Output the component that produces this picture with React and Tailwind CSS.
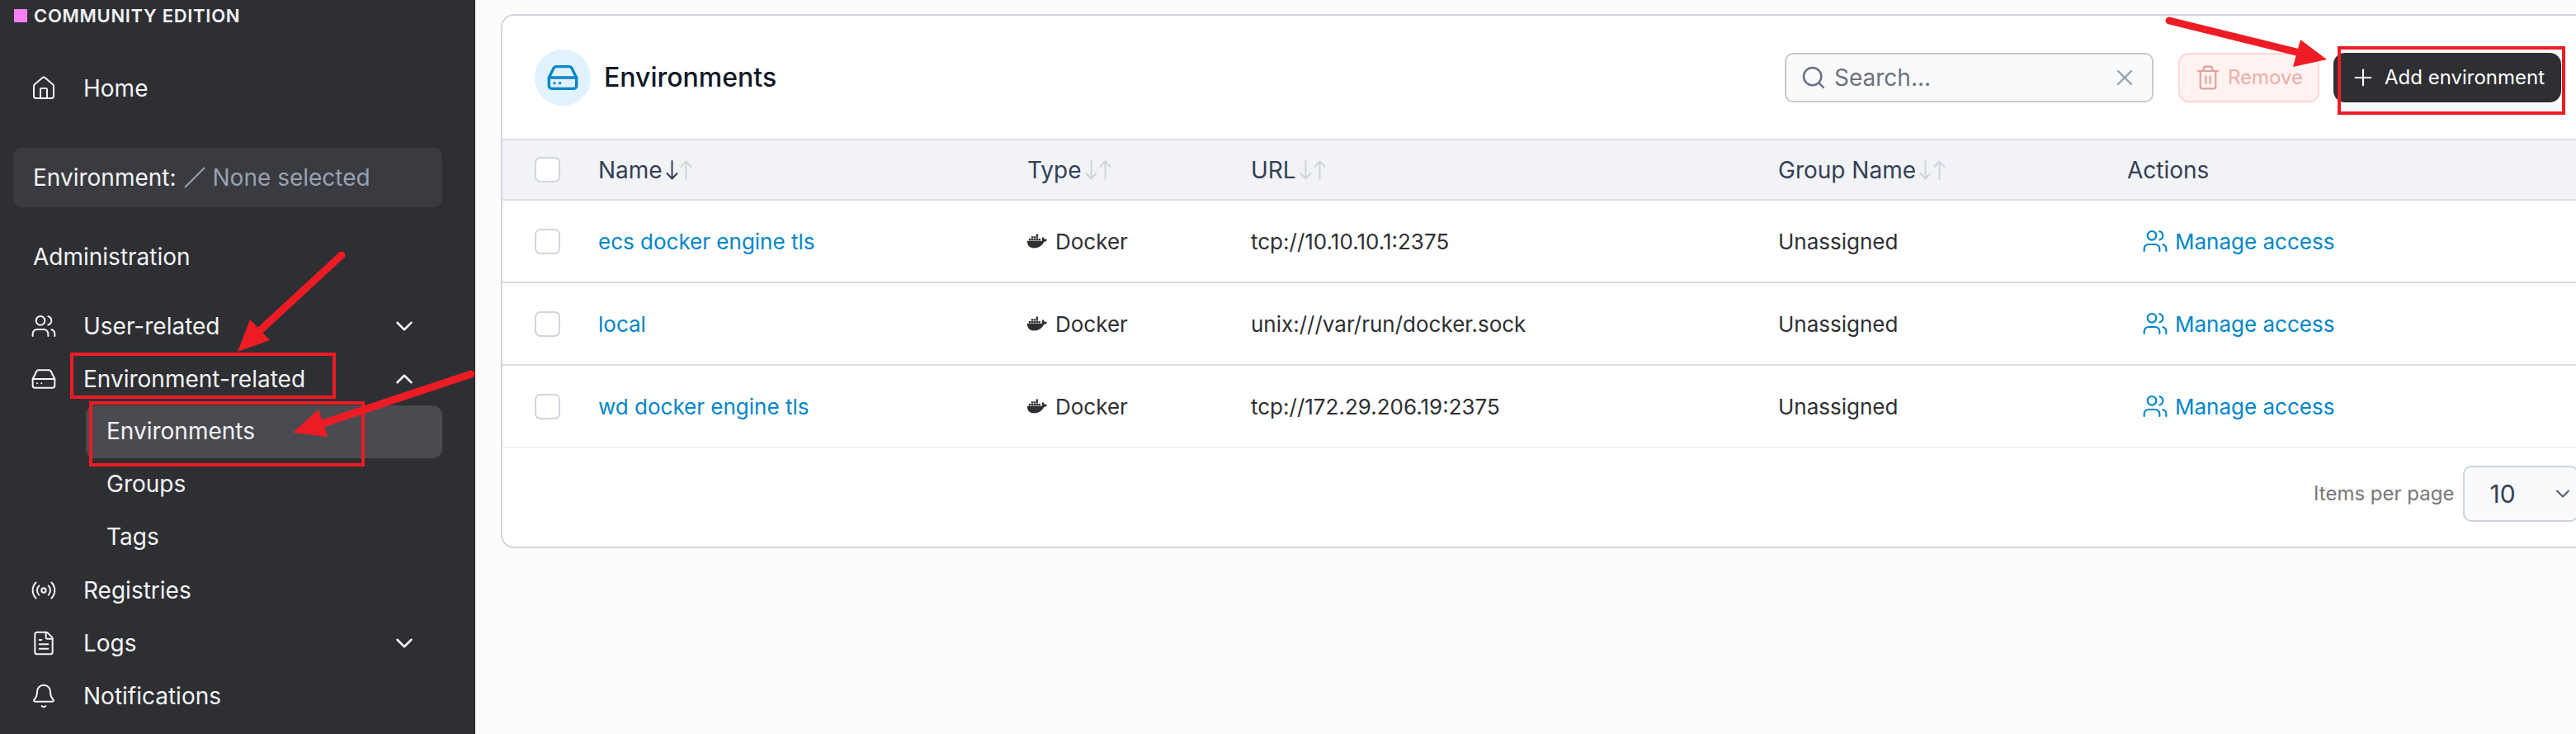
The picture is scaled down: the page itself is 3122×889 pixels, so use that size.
import React from "react";
import {
  Bell,
  ChevronDown,
  ChevronUp,
  FileText,
  HardDrive,
  Home,
  Plus,
  Radio,
  Search,
  Trash2,
  Users,
  X,
} from "lucide-react";
import { FaDocker } from "react-icons/fa";

const rows = [
  { name: "ecs docker engine tls", url: "tcp://10.10.10.1:2375" },
  { name: "local", url: "unix:///var/run/docker.sock" },
  { name: "wd docker engine tls", url: "tcp://172.29.206.19:2375" },
];

const gridCols = "grid grid-cols-[116px_520px_271px_639px_423px_1fr] items-center";

function NavItem({ icon: Icon, label, chevron }) {
  return (
    <div className="flex h-16 items-center pb-[1px] pl-[37px] pr-[69px] text-[28px] text-[#f2f3f5]">
      <Icon className="h-8 w-8 shrink-0" strokeWidth={1.5} />
      <span className="ml-8">{label}</span>
      {chevron === "down" && <ChevronDown className="ml-auto h-[34px] w-[34px]" strokeWidth={1.8} />}
      {chevron === "up" && <ChevronUp className="ml-auto h-[34px] w-[34px]" strokeWidth={1.8} />}
    </div>
  );
}

function SubItem({ label, active }) {
  return (
    <div
      className={`ml-[104px] mr-[40px] flex h-16 items-center rounded-[12px] pb-[2px] pl-[25px] text-[28px] text-[#f2f3f5] ${
        active ? "bg-[#4a4b50]" : ""
      }`}
    >
      {label}
    </div>
  );
}

// thin, tall sort arrows, lucide's are too wide for these
function SortArrow({ up, className }) {
  return (
    <svg className={`h-6 w-[15px] ${className}`} viewBox="0 0 15 24" fill="none" stroke="currentColor" strokeWidth="2" strokeLinecap="round" strokeLinejoin="round">
      {up ? <path d="M7.5 23V1.5M1.5 8l6-6.5 6 6.5" /> : <path d="M7.5 1v21.5M1.5 16l6 6.5 6-6.5" />}
    </svg>
  );
}

function SortHead({ label, sorted }) {
  return (
    <div className="flex items-center text-[28px] text-[#344054]">
      <span>{label}</span>
      <SortArrow className={`ml-[4px] ${sorted ? "text-[#344054]" : "text-[#d0d5dd]"}`} />
      <SortArrow up className="ml-[2px] text-[#d0d5dd]" />
    </div>
  );
}

function Checkbox() {
  return <div className="ml-[39px] h-[31px] w-[31px] rounded-[7px] border-2 border-[#d0d5dd] bg-white" />;
}

function Sidebar() {
  return (
    <aside className="h-full w-[576px] shrink-0 bg-[#2e2f33]">
      <div className="flex h-[75px] items-start pl-[17px] pt-[11px]">
        <div className="h-4 w-4 bg-[#fb7ff0]" />
        <span className="ml-2 -mt-[8px] text-[22px] font-semibold tracking-[0.7px] text-[#f2f3f5]">COMMUNITY EDITION</span>
      </div>
      <NavItem icon={Home} label="Home" />
      <div className="mx-4 mt-[40px] flex h-[72px] w-[520px] items-center rounded-[10px] bg-[#3a3b40] pb-[1px] pl-[24px] text-[28px] text-[#f2f3f5]">
        <span>Environment:</span>
        <svg className="ml-[9px] h-[26px] w-[26px] text-[#98a2b3]" viewBox="0 0 26 26">
          <line x1="1" y1="25" x2="25" y2="1" stroke="currentColor" strokeWidth="2" />
        </svg>
        <span className="ml-[9px] text-[#98a2b3]">None selected</span>
      </div>
      <div className="mt-[28px] flex h-[64px] items-center pl-[40px] text-[28px] text-[#f2f3f5]">Administration</div>
      <div className="mt-[20px]">
        <NavItem icon={Users} label="User-related" chevron="down" />
        <NavItem icon={HardDrive} label="Environment-related" chevron="up" />
        <SubItem label="Environments" active />
        <SubItem label="Groups" />
        <SubItem label="Tags" />
        <NavItem icon={Radio} label="Registries" />
        <NavItem icon={FileText} label="Logs" chevron="down" />
        <NavItem icon={Bell} label="Notifications" />
      </div>
    </aside>
  );
}

function EnvironmentsCard() {
  return (
    <section className="mt-[17px] ml-[31px] h-[647px] w-[2540px] shrink-0 rounded-[16px] border-2 border-[#d0d5dd] bg-white">
      <div className="flex h-[149px] items-center pl-[39px] pr-[41px]">
        <div className="flex h-[68px] w-[68px] items-center justify-center rounded-full bg-[#e0f2fe]">
          <HardDrive className="h-10 w-10 text-[#0086c9]" strokeWidth={2} />
        </div>
        <h1 className="ml-[16px] text-[32px] font-medium text-[#101828]">Environments</h1>
        <div className="ml-auto flex h-[60px] w-[447px] items-center rounded-[10px] border-2 border-[#c9c9c9] bg-[#f9fafb] pl-[17px] pr-[17px]">
          <Search className="h-8 w-8 text-[#667085]" strokeWidth={1.8} />
          <span className="ml-[9px] text-[28px] text-[#6b7280]">Search...</span>
          <X className="ml-auto h-8 w-8 text-[#98a2b3]" strokeWidth={1.8} />
        </div>
        <button className="ml-[30px] flex h-[60px] w-[171px] items-center justify-center rounded-[12px] border-2 border-[#fdd8d4] bg-[#fff2f1] text-[24px] text-[#ebaea8]">
          <Trash2 className="mr-[8px] h-8 w-8 text-[#e0a09a]" strokeWidth={1.6} />
          Remove
        </button>
        <button className="ml-[17px] flex h-[60px] w-[276px] items-center justify-center rounded-[14px] bg-[#2e2f33] text-[24px] text-white">
          <Plus className="mr-[10px] h-8 w-8" strokeWidth={1.6} />
          Add environment
        </button>
      </div>

      <div className={`${gridCols} h-[75px] border-y-2 border-[#dcdde0] bg-[#f1f3f7]`}>
        <Checkbox />
        <SortHead label="Name" sorted />
        <SortHead label="Type" />
        <SortHead label="URL" />
        <SortHead label="Group Name" />
        <div className="text-[28px] text-[#344054]">Actions</div>
      </div>

      {rows.map((row, i) => (
        <div
          key={row.name}
          className={`${gridCols} h-[100px] border-b-2 ${i === 2 ? "border-[#f2f3f4]" : "border-[#dcdde0]"} text-[26px] text-[#2e2f33]`}
        >
          <Checkbox />
          <span className="text-[#0086c9]">{row.name}</span>
          <div className="flex items-center">
            <FaDocker className="h-6 w-6" />
            <span className="ml-[10px]">Docker</span>
          </div>
          <span>{row.url}</span>
          <span>Unassigned</span>
          <div className="flex items-center pl-[18px] text-[#0086c9]">
            <Users className="h-8 w-8" strokeWidth={1.6} />
            <span className="ml-[8px]">Manage access</span>
          </div>
        </div>
      ))}

      <div className="flex h-[110px] items-center justify-start pl-[2195px]">
        <span className="whitespace-nowrap text-[24px] text-[#777777]">Items per page</span>
        <div className="ml-[11px] flex h-[68px] w-[140px] shrink-0 items-center rounded-[10px] border-2 border-[#cfd4dc] bg-[#f9fafb] pl-[30px] text-[30px] text-[#344054]">
          <span>10</span>
          <ChevronDown className="ml-[43px] h-7 w-7 text-[#475467]" strokeWidth={1.6} />
        </div>
      </div>
    </section>
  );
}

// red annotations pasted over the screenshot
function Annotations() {
  return (
    <svg className="pointer-events-none absolute left-0 top-0 h-[889px] w-[3122px]" viewBox="0 0 3122 889">
      <g fill="none" stroke="#ed1c24" strokeWidth="4">
        <rect x="87" y="429" width="318" height="52" />
        <rect x="110" y="488" width="330" height="75" />
        <rect x="2835" y="58" width="272" height="79" />
      </g>
      <g fill="none" stroke="#ed1c24" strokeWidth="9" strokeLinecap="round">
        <line x1="414" y1="309" x2="310" y2="405" />
        <line x1="571" y1="453" x2="385" y2="515" />
        <line x1="2629" y1="25" x2="2795" y2="66" />
      </g>
      <g fill="#ed1c24">
        <polygon points="288,426 303,387 327,412" />
        <polygon points="355,524 386,496 397,529" />
        <polygon points="2820,72 2788,48 2779,81" />
      </g>
    </svg>
  );
}

export default function App() {
  return (
    <div className="relative flex h-[889px] w-[3122px] overflow-hidden bg-[#fcfcfc] font-['Inter',sans-serif]">
      <Sidebar />
      <EnvironmentsCard />
      <Annotations />
    </div>
  );
}
